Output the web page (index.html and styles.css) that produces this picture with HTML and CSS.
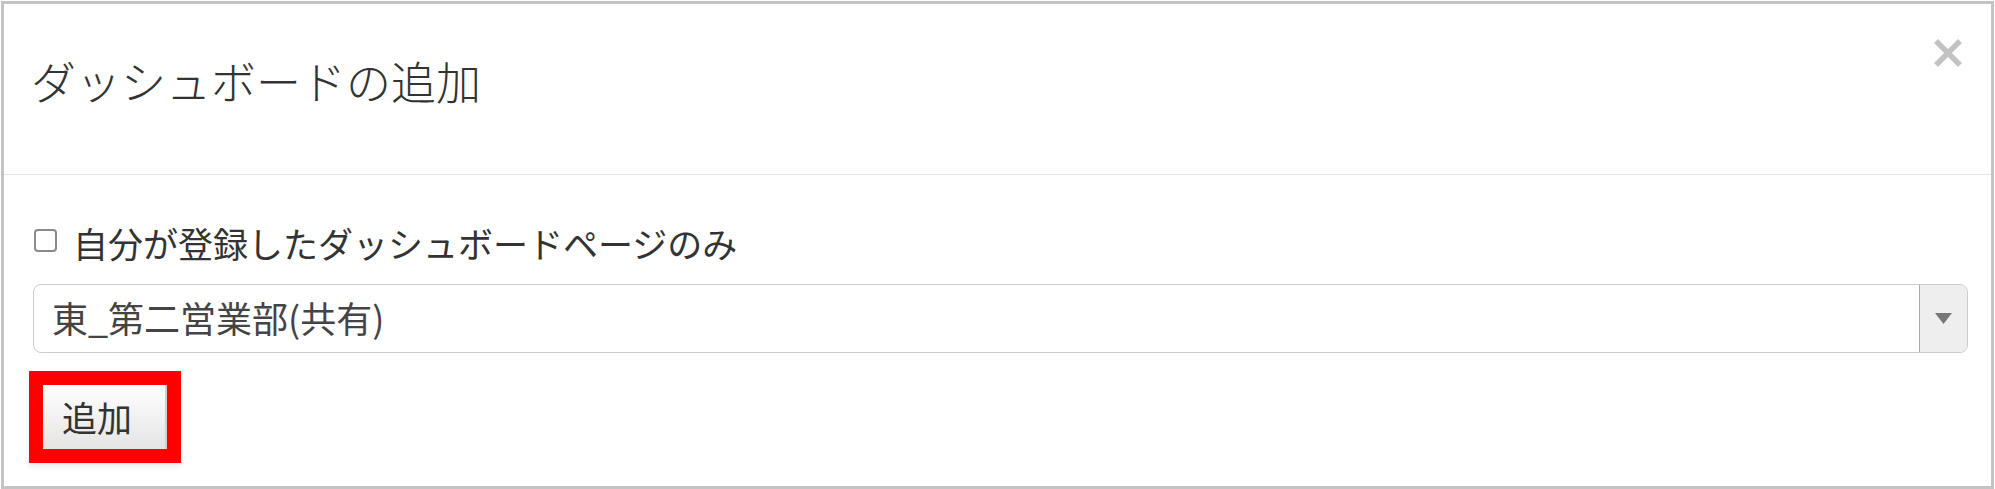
FILE: index.html
```html
<!DOCTYPE html>
<html lang="ja">
<head>
<meta charset="utf-8">
<link rel="stylesheet" href="styles.css">
</head>
<body>
<div class="modal">
  <div class="modal-header">
    <h4 class="modal-title">ダッシュボードの追加</h4>
    <button class="close" type="button" aria-label="閉じる">
      <svg viewBox="0 0 30 30" width="30" height="30"><path d="M3 3 L27 27 M27 3 L3 27" stroke="#c2c2c2" stroke-width="5.5" stroke-linecap="butt" fill="none"/></svg>
    </button>
  </div>
  <div class="modal-body">
    <label class="check-row"><span class="checkbox"></span><span class="check-label">自分が登録したダッシュボードページのみ</span></label>
    <div class="select">
      <span class="select-value">東_第二営業部(共有)</span>
      <span class="select-arrow"><svg viewBox="0 0 17 11" width="17" height="11"><path d="M0 0 H17 L8.5 11 Z" fill="#777"/></svg></span>
    </div>
    <div class="highlight">
      <button class="btn" type="button">追加</button>
    </div>
  </div>
</div>
</body>
</html>
```

FILE: styles.css
```css
html, body {
  margin: 0;
  padding: 0;
  background: #fff;
}
body {
  font-family: "Noto Sans CJK JP", "Noto Sans", sans-serif;
  color: #333;
}
.modal {
  box-sizing: border-box;
  margin: 1px 1px 0 1px;
  width: 1993px;
  height: 488px;
  border: 3px solid #c4c4c4;
  background: #fff;
}
.modal-header {
  box-sizing: border-box;
  height: 171px;
  border-bottom: 1px solid #e5e5e5;
  display: flex;
  justify-content: space-between;
  align-items: flex-start;
  padding: 0 28px 0 27px;
}
.modal-title {
  margin: 45px 0 0 0;
  font-size: 45px;
  line-height: 64px;
  font-weight: 300;
  color: #333;
}
.close {
  margin-top: 34px;
  padding: 0;
  border: 0;
  background: transparent;
  width: 30px;
  height: 30px;
  display: flex;
}
.modal-body {
  padding: 43px 23px 0 29px;
}
.check-row {
  display: flex;
  align-items: center;
  height: 50px;
  padding-left: 1px;
}
.checkbox {
  box-sizing: border-box;
  width: 23px;
  height: 23px;
  border: 2px solid #8a8a8a;
  border-radius: 4px;
  margin-top: -6px;
  background: #fff;
}
.check-label {
  margin-left: 16px;
  font-size: 35px;
  line-height: 50px;
  color: #333;
}
.select {
  box-sizing: border-box;
  margin-top: 16px;
  height: 69px;
  border: 1px solid #ccc;
  border-radius: 8px;
  display: flex;
  align-items: stretch;
  overflow: hidden;
}
.select-value {
  flex: 1;
  padding-left: 18px;
  font-size: 36px;
  line-height: 64px;
  color: #444;
}
.select-arrow {
  width: 47px;
  background: #eee;
  border-left: 1px solid #aaa;
  display: flex;
  align-items: center;
  justify-content: center;
}
.highlight {
  display: inline-block;
  margin-top: 18px;
  margin-left: -4px;
  border: 14px solid #ff0000;
  box-shadow: 0 4px 6px rgba(0, 0, 0, 0.08);
}
.btn {
  display: block;
  box-sizing: border-box;
  width: 124px;
  height: 64px;
  margin: 0;
  padding: 0 0 0 19px;
  text-align: left;
  border: 0;
  border-right: 2px solid #d0d0d0;
  background: linear-gradient(#ffffff, #e4e4e4);
  font-family: "Noto Sans CJK JP", "Noto Sans", sans-serif;
  font-size: 35px;
  line-height: 64px;
  color: #333;
}
```
